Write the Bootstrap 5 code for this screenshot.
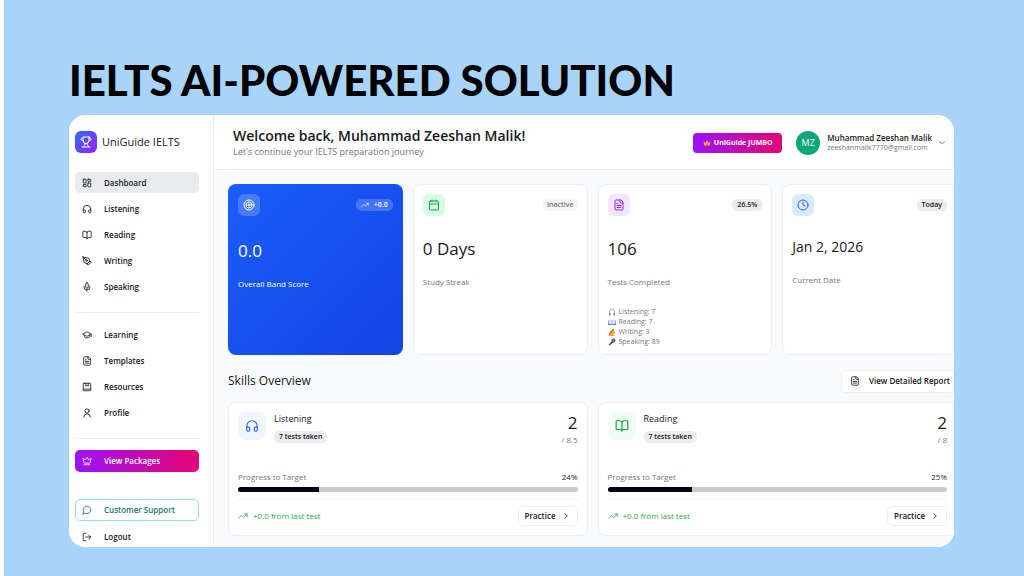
<!DOCTYPE html>
<html lang="en">
<head>
<meta charset="utf-8">
<meta name="viewport" content="width=device-width, initial-scale=1">
<title>UniGuide IELTS</title>
<link href="https://cdn.jsdelivr.net/npm/bootstrap@5.3.0/dist/css/bootstrap.min.css" rel="stylesheet">
<style>
  body { font-family: "Open Sans", "Noto Sans", sans-serif; font-size: 8px; line-height: 12px; color: #18181b; background: #a8d4fa; border-left: 4px solid #fff; min-height: 100vh; }
  .stage { padding: 52px 70px 29px 65px; }
  .headline { font: 900 42px/56px Lato, sans-serif; color: #000; margin-bottom: 7px; white-space: nowrap; }
  .panel { background: #fff; border-radius: 16px; overflow: hidden; }
  .ico { width: 10px; height: 10px; flex: none; fill: none; stroke: currentColor; stroke-width: 2; stroke-linecap: round; stroke-linejoin: round; }
  .ico-md { width: 12px; height: 12px; }
  .ico-lg { width: 14px; height: 14px; }
  .emo { width: 8px; height: 8px; flex: none; }

  .side { width: 145px; flex: none; border-right: 1px solid #ececf0; padding: 16px 14px 0 6px; }
  .brand { font-size: 11px; line-height: 22px; gap: 5px; margin-bottom: 19px; color: #18181b; }
  .brand-mark { width: 22px; height: 22px; border-radius: 6px; color: #fff; background: linear-gradient(135deg, #2b6bfb, #9a1ffa); }
  .menu { gap: 5px; }
  .menu-link { height: 21px; padding: 0 7px; gap: 12px; border-radius: 5px; font-size: 8px; font-weight: 600; color: #18181b; text-decoration: none; border: 0; background: none; width: 100%; text-align: left; }
  .menu-link.active { background: #e9eaee; }
  .rule { border-top: 1px solid #ebebee; margin: 15px 0 11px; }
  .menu-pack { color: #fff; background: linear-gradient(90deg, #9a12fa, #e0057c 90%); margin-bottom: 27px; height: 22px; }
  .menu-help { color: #0f766e; border: 1px solid #8fe5cb; height: 22px; padding: 0 6px; margin-bottom: 5px; background: #fff; }

  .topbar { height: 55px; border-bottom: 1px solid #ececf0; padding: 2px 9px 0 19px; }
  .hello { font-size: 14px; line-height: 18px; font-weight: 600; margin: 0; white-space: nowrap; }
  .muted { color: #73767c; }
  .sub { font-size: 9px; line-height: 14px; }
  .top-actions { gap: 14px; }
  .plan { width: 89px; height: 20px; border: 0; border-radius: 4px; padding: 0; color: #fff; font-size: 7px; font-weight: 700; gap: 3px; background: linear-gradient(90deg, #9a12fa, #e0057c 90%); }
  .avatar { width: 24px; height: 24px; border-radius: 50%; background: #0da57c; color: #fff; font-size: 9px; }
  .user { border: 0; background: none; padding: 0; gap: 7px; color: inherit; text-align: left; white-space: nowrap; line-height: 10px; }
  .user-name { font-size: 8px; font-weight: 600; }
  .user-mail { font-size: 7px; }

  .content { background: #f9fafc; padding: 14px 0 11px 14px; }
  /* the tile rows run just past the rounded panel's edge */
  .tiles { --bs-gutter-x: 10px; margin-right: -8px; }
  .tile { background: #fff; border: 1px solid #eeeff2; border-radius: 8px; padding: 9px; height: 100%; }
  .stat { min-height: 171px; padding-bottom: 6px; }
  .stat-main { border: 0; padding: 10px; color: #fff; background: linear-gradient(135deg, #1a5dfb, #1443e4); }
  .chip-ico { width: 22px; height: 22px; border-radius: 6px; }
  .pill { font-size: 7px; font-weight: 600; line-height: 12px; padding: 0 5px; border-radius: 5px; background: #ececf0; color: #18181b; gap: 5px; }
  .pill-quiet { background: #f3f4f6; color: #73767c; padding: 0 4px; }
  .stat-main .pill, .stat-main .chip-ico { background: rgba(255,255,255,.2); }
  .figure { font-size: 17px; line-height: 24px; margin: 21px 0 15px; }
  .stat-main .figure { margin-top: 23px; }
  .figure-date { font-size: 14px; line-height: 20px; margin-bottom: 17px; }
  .tally { font-size: 7px; line-height: 10px; margin: 19px 0 0; }
  .tally li { gap: 3px; }
  .section-bar { margin: 14px 0 9px; }
  .section-title { font-size: 12px; line-height: 24px; margin: 0; }
  .btn-line { border: 1px solid #eeeff2; border-radius: 5px; background: #fff; font-size: 8px; font-weight: 600; color: #18181b; padding: 0 6px; height: 20px; gap: 5px; }
  .report { height: 23px; gap: 9px; padding: 0 4px 0 8px; border-right: 0; border-radius: 5px 0 0 5px; }
  .skill-head { margin-bottom: 25px; }
  .skill-ico { width: 28px; height: 28px; border-radius: 7px; }
  .skill-title { font-size: 9px; line-height: 14px; margin: 0 0 4px; }
  .score { font-size: 17px; line-height: 22px; }
  .meter { --bs-progress-height: 5px; --bs-progress-bg: #cbcbcf; --bs-progress-bar-bg: #030213; --bs-progress-border-radius: 3px; margin-bottom: 7px; }
  .skill-foot { border-top: 1px solid #f1f2f4; padding-top: 6px; }
  .gain { gap: 5px; color: #1fa552; }
  .tone-green { background: #d9fbe5; color: #1ba34e; }
  .tone-purple { background: #f2e6ff; color: #9525e8; }
  .tone-blue { background: #dbe9fe; color: #2563eb; }
  .tone-blue-soft { background: #eff6ff; color: #2563eb; }
  .tone-green-soft { background: #f0fdf4; color: #16a34a; }
</style>
</head>
<body>
<svg class="d-none" aria-hidden="true">
  <symbol id="trophy" viewBox="0 0 24 24"><path d="M6 9H4.500a2.500 2.500 0 0 1 0-5H6M18 9h1.500a2.500 2.500 0 0 0 0-5H18M4 22h16M10 14.700V17c0 .6-.5 1-1 1.200C7.900 18.800 7 20.200 7 22M14 14.700V17c0 .6.500 1 1 1.200 1.100.6 2 2 2 3.800M18 2H6v7a6 6 0 0 0 12 0V2Z"/></symbol>
  <symbol id="grid" viewBox="0 0 24 24"><rect x="3" y="3" width="7" height="9" rx="1"/><rect x="14" y="3" width="7" height="5" rx="1"/><rect x="14" y="12" width="7" height="9" rx="1"/><rect x="3" y="16" width="7" height="5" rx="1"/></symbol>
  <symbol id="phones" viewBox="0 0 24 24"><path d="M3 14h3a2 2 0 0 1 2 2v3a2 2 0 0 1-2 2H5a2 2 0 0 1-2-2v-7a9 9 0 0 1 18 0v7a2 2 0 0 1-2 2h-1a2 2 0 0 1-2-2v-3a2 2 0 0 1 2-2h3"/></symbol>
  <symbol id="book" viewBox="0 0 24 24"><path d="M12 7v14M3 18a1 1 0 0 1-1-1V4a1 1 0 0 1 1-1h5a4 4 0 0 1 4 4 4 4 0 0 1 4-4h5a1 1 0 0 1 1 1v13a1 1 0 0 1-1 1h-6a3 3 0 0 0-3 3 3 3 0 0 0-3-3z"/></symbol>
  <symbol id="pen" viewBox="0 0 24 24"><path d="m12 19 7-7 3 3-7 7-3-3ZM18 13l-1.500-7.500L2 2l3.500 14.500L13 18l5-5ZM2 2l7.600 7.600"/><circle cx="11" cy="11" r="2"/></symbol>
  <symbol id="mic" viewBox="0 0 24 24"><path d="M12 2a3 3 0 0 0-3 3v7a3 3 0 0 0 6 0V5a3 3 0 0 0-3-3ZM19 10v2a7 7 0 0 1-14 0v-2M12 19v3"/></symbol>
  <symbol id="cap" viewBox="0 0 24 24"><path d="M21.400 10.900a1 1 0 0 0 0-1.800L12.800 5.200a2 2 0 0 0-1.600 0L2.600 9.100a1 1 0 0 0 0 1.800l8.600 3.900a2 2 0 0 0 1.600 0zM22 10v6M6 12.500V16a6 3 0 0 0 12 0v-3.500"/></symbol>
  <symbol id="doc" viewBox="0 0 24 24"><path d="M15 2H6a2 2 0 0 0-2 2v16a2 2 0 0 0 2 2h12a2 2 0 0 0 2-2V7ZM14 2v4a2 2 0 0 0 2 2h4M10 9H8M16 13H8M16 17H8"/></symbol>
  <symbol id="album" viewBox="0 0 24 24"><rect x="3" y="3" width="18" height="18" rx="2"/><path d="M3 17h18M9 3v7l3-2 3 2V3"/></symbol>
  <symbol id="person" viewBox="0 0 24 24"><circle cx="12" cy="7" r="5"/><path d="M4 22a8 8 0 0 1 16 0"/></symbol>
  <symbol id="crown" viewBox="0 0 24 24"><path d="M11.600 3.300a.5.500 0 0 1 .9 0l3 5.600a1 1 0 0 0 1.500.3l4.200-3.700a.5.500 0 0 1 .8.500l-2.800 10.300a1 1 0 0 1-1 .7H5.800a1 1 0 0 1-1-.7L2 6a.5.500 0 0 1 .8-.5l4.300 3.700a1 1 0 0 0 1.500-.3zM5 21h14"/></symbol>
  <symbol id="chat" viewBox="0 0 24 24"><path d="M7.900 20A9 9 0 1 0 4 16.100L2 22Z"/></symbol>
  <symbol id="exit" viewBox="0 0 24 24"><path d="M9 21H5a2 2 0 0 1-2-2V5a2 2 0 0 1 2-2h4M16 17l5-5-5-5M21 12H9"/></symbol>
  <symbol id="target" viewBox="0 0 24 24"><circle cx="12" cy="12" r="10"/><circle cx="12" cy="12" r="6"/><circle cx="12" cy="12" r="2"/></symbol>
  <symbol id="trend" viewBox="0 0 24 24"><path d="M22 7l-8.500 8.500-5-5L2 17M16 7h6v6"/></symbol>
  <symbol id="calendar" viewBox="0 0 24 24"><rect x="3" y="4" width="18" height="18" rx="2"/><path d="M8 2v4M16 2v4M3 10h18"/></symbol>
  <symbol id="clock" viewBox="0 0 24 24"><circle cx="12" cy="12" r="10"/><path d="M12 6v6l4 2"/></symbol>
  <symbol id="right" viewBox="0 0 24 24"><path d="m9 18 6-6-6-6"/></symbol>
  <symbol id="e-phones" viewBox="0 0 16 16"><path d="M3 11V7a5 5 0 0 1 10 0v4" fill="none" stroke="#9a9ea6" stroke-width="1.500"/><rect x="2" y="9" width="3" height="6" rx="1" fill="#777b84"/><rect x="11" y="9" width="3" height="6" rx="1" fill="#777b84"/></symbol>
  <symbol id="e-book" viewBox="0 0 16 16"><path d="M0 5h16v9H0z" fill="#3f7fd6"/><path d="M1 4q4-2 7 0 3-2 7 0v8q-4-1-7 1-3-2-7-1z" fill="#dfe6f0"/><path d="M8 4v9" stroke="#9aa9c0"/></symbol>
  <symbol id="e-write" viewBox="0 0 16 16"><path d="m1 11 4-6 6-1 4 5-3 4-6 2z" fill="#fbb034"/><path d="m2 14 9-13 2 1-9 12z" fill="#c8502c"/><path d="M1 15h12" stroke="#e88a22" stroke-width="1.500"/></symbol>
  <symbol id="e-mic" viewBox="0 0 16 16"><path d="m8 6 3 3-8 6-2-1z" fill="#4b4660"/><circle cx="11" cy="5" r="4" fill="#65617c"/></symbol>
  <symbol id="e-crown" viewBox="0 0 16 16"><path d="m1 5 4 3 3-6 3 6 4-3-2 9H3z" fill="#f8b13c"/><path d="M3 12h10v2H3z" fill="#d9672b"/><circle cx="8" cy="10" r="1.500" fill="#d5365e"/></symbol>
</svg>

<main class="stage">
  <h1 class="headline">IELTS AI-POWERED SOLUTION</h1>
  <div class="panel d-flex">
    <aside class="side">
      <div class="brand d-flex align-items-center"><span class="brand-mark d-flex align-items-center justify-content-center"><svg class="ico ico-md"><use href="#trophy"/></svg></span>UniGuide IELTS</div>
      <nav class="menu d-flex flex-column">
        <a href="#" class="menu-link active d-flex align-items-center"><svg class="ico"><use href="#grid"/></svg>Dashboard</a>
        <a href="#" class="menu-link d-flex align-items-center"><svg class="ico"><use href="#phones"/></svg>Listening</a>
        <a href="#" class="menu-link d-flex align-items-center"><svg class="ico"><use href="#book"/></svg>Reading</a>
        <a href="#" class="menu-link d-flex align-items-center"><svg class="ico"><use href="#pen"/></svg>Writing</a>
        <a href="#" class="menu-link d-flex align-items-center"><svg class="ico"><use href="#mic"/></svg>Speaking</a>
      </nav>
      <div class="rule"></div>
      <nav class="menu d-flex flex-column">
        <a href="#" class="menu-link d-flex align-items-center"><svg class="ico"><use href="#cap"/></svg>Learning</a>
        <a href="#" class="menu-link d-flex align-items-center"><svg class="ico"><use href="#doc"/></svg>Templates</a>
        <a href="#" class="menu-link d-flex align-items-center"><svg class="ico"><use href="#album"/></svg>Resources</a>
        <a href="#" class="menu-link d-flex align-items-center"><svg class="ico"><use href="#person"/></svg>Profile</a>
      </nav>
      <div class="rule"></div>
      <button type="button" class="menu-link menu-pack d-flex align-items-center"><svg class="ico"><use href="#crown"/></svg>View Packages</button>
      <button type="button" class="menu-link menu-help d-flex align-items-center"><svg class="ico"><use href="#chat"/></svg>Customer Support</button>
      <button type="button" class="menu-link d-flex align-items-center"><svg class="ico"><use href="#exit"/></svg>Logout</button>
    </aside>

    <div class="flex-grow-1 d-flex flex-column" style="min-width:0">
      <header class="topbar d-flex align-items-center justify-content-between">
        <div>
          <h2 class="hello">Welcome back, Muhammad Zeeshan Malik!</h2>
          <div class="sub muted">Let's continue your IELTS preparation journey</div>
        </div>
        <div class="top-actions d-flex align-items-center">
          <button type="button" class="plan d-flex align-items-center justify-content-center"><svg class="emo"><use href="#e-crown"/></svg>UniGuide JUMBO</button>
          <button type="button" class="user d-flex align-items-center">
            <span class="avatar d-flex align-items-center justify-content-center">MZ</span>
            <span class="d-flex flex-column"><span class="user-name">Muhammad Zeeshan Malik</span><span class="user-mail muted">zeeshanmalik7770@gmail.com</span></span>
            <svg width="6" height="4" viewBox="0 0 6 4" fill="none" stroke="#8a8d92"><path d="M0 1q3 3 6 0"/></svg>
          </button>
        </div>
      </header>

      <div class="content flex-grow-1">
        <div class="row tiles">
          <div class="col-3">
            <section class="tile stat stat-main">
              <div class="d-flex align-items-center justify-content-between">
                <span class="chip-ico d-flex align-items-center justify-content-center"><svg class="ico ico-md"><use href="#target"/></svg></span>
                <span class="pill text-white d-flex align-items-center"><svg class="emo ico"><use href="#trend"/></svg>+0.0</span>
              </div>
              <div class="figure">0.0</div>
              <div>Overall Band Score</div>
            </section>
          </div>
          <div class="col-3">
            <section class="tile stat">
              <div class="d-flex align-items-center justify-content-between">
                <span class="chip-ico tone-green d-flex align-items-center justify-content-center"><svg class="ico ico-md"><use href="#calendar"/></svg></span>
                <span class="pill pill-quiet">Inactive</span>
              </div>
              <div class="figure">0 Days</div>
              <div class="muted">Study Streak</div>
            </section>
          </div>
          <div class="col-3">
            <section class="tile stat">
              <div class="d-flex align-items-center justify-content-between">
                <span class="chip-ico tone-purple d-flex align-items-center justify-content-center"><svg class="ico ico-md"><use href="#doc"/></svg></span>
                <span class="pill">26.5%</span>
              </div>
              <div class="figure">106</div>
              <div class="muted">Tests Completed</div>
              <ul class="tally list-unstyled muted">
                <li class="d-flex align-items-center"><svg class="emo"><use href="#e-phones"/></svg>Listening: 7</li>
                <li class="d-flex align-items-center"><svg class="emo"><use href="#e-book"/></svg>Reading: 7</li>
                <li class="d-flex align-items-center"><svg class="emo"><use href="#e-write"/></svg>Writing: 3</li>
                <li class="d-flex align-items-center"><svg class="emo"><use href="#e-mic"/></svg>Speaking: 89</li>
              </ul>
            </section>
          </div>
          <div class="col-3">
            <section class="tile stat">
              <div class="d-flex align-items-center justify-content-between">
                <span class="chip-ico tone-blue d-flex align-items-center justify-content-center"><svg class="ico ico-md"><use href="#clock"/></svg></span>
                <span class="pill">Today</span>
              </div>
              <div class="figure figure-date">Jan 2, 2026</div>
              <div class="muted">Current Date</div>
            </section>
          </div>
        </div>

        <div class="section-bar d-flex align-items-center justify-content-between">
          <h3 class="section-title">Skills Overview</h3>
          <button type="button" class="btn-line report d-flex align-items-center"><svg class="ico"><use href="#doc"/></svg>View Detailed Report</button>
        </div>

        <div class="row tiles">
          <div class="col-6">
            <section class="tile">
              <div class="skill-head d-flex justify-content-between">
                <div class="d-flex gap-2">
                  <span class="skill-ico tone-blue-soft d-flex align-items-center justify-content-center"><svg class="ico ico-lg"><use href="#phones"/></svg></span>
                  <div><h4 class="skill-title">Listening</h4><span class="pill d-inline-block">7 tests taken</span></div>
                </div>
                <div class="text-end"><div class="score">2</div><div class="muted">/ 8.5</div></div>
              </div>
              <div class="d-flex justify-content-between mb-1"><span class="muted">Progress to Target</span><span>24%</span></div>
              <div class="progress meter" role="progressbar" aria-label="Listening progress" aria-valuenow="24" aria-valuemin="0" aria-valuemax="100"><div class="progress-bar" style="width:24%"></div></div>
              <div class="skill-foot d-flex align-items-center justify-content-between">
                <span class="gain d-flex align-items-center"><svg class="ico"><use href="#trend"/></svg>+0.0 from last test</span>
                <button type="button" class="btn-line d-flex align-items-center">Practice<svg class="ico"><use href="#right"/></svg></button>
              </div>
            </section>
          </div>
          <div class="col-6">
            <section class="tile">
              <div class="skill-head d-flex justify-content-between">
                <div class="d-flex gap-2">
                  <span class="skill-ico tone-green-soft d-flex align-items-center justify-content-center"><svg class="ico ico-lg"><use href="#book"/></svg></span>
                  <div><h4 class="skill-title">Reading</h4><span class="pill d-inline-block">7 tests taken</span></div>
                </div>
                <div class="text-end"><div class="score">2</div><div class="muted">/ 8</div></div>
              </div>
              <div class="d-flex justify-content-between mb-1"><span class="muted">Progress to Target</span><span>25%</span></div>
              <div class="progress meter" role="progressbar" aria-label="Reading progress" aria-valuenow="25" aria-valuemin="0" aria-valuemax="100"><div class="progress-bar" style="width:25%"></div></div>
              <div class="skill-foot d-flex align-items-center justify-content-between">
                <span class="gain d-flex align-items-center"><svg class="ico"><use href="#trend"/></svg>+0.0 from last test</span>
                <button type="button" class="btn-line d-flex align-items-center">Practice<svg class="ico"><use href="#right"/></svg></button>
              </div>
            </section>
          </div>
        </div>
      </div>
    </div>
  </div>
</main>
<script src="https://cdn.jsdelivr.net/npm/bootstrap@5.3.0/dist/js/bootstrap.bundle.min.js"></script>
</body>
</html>
